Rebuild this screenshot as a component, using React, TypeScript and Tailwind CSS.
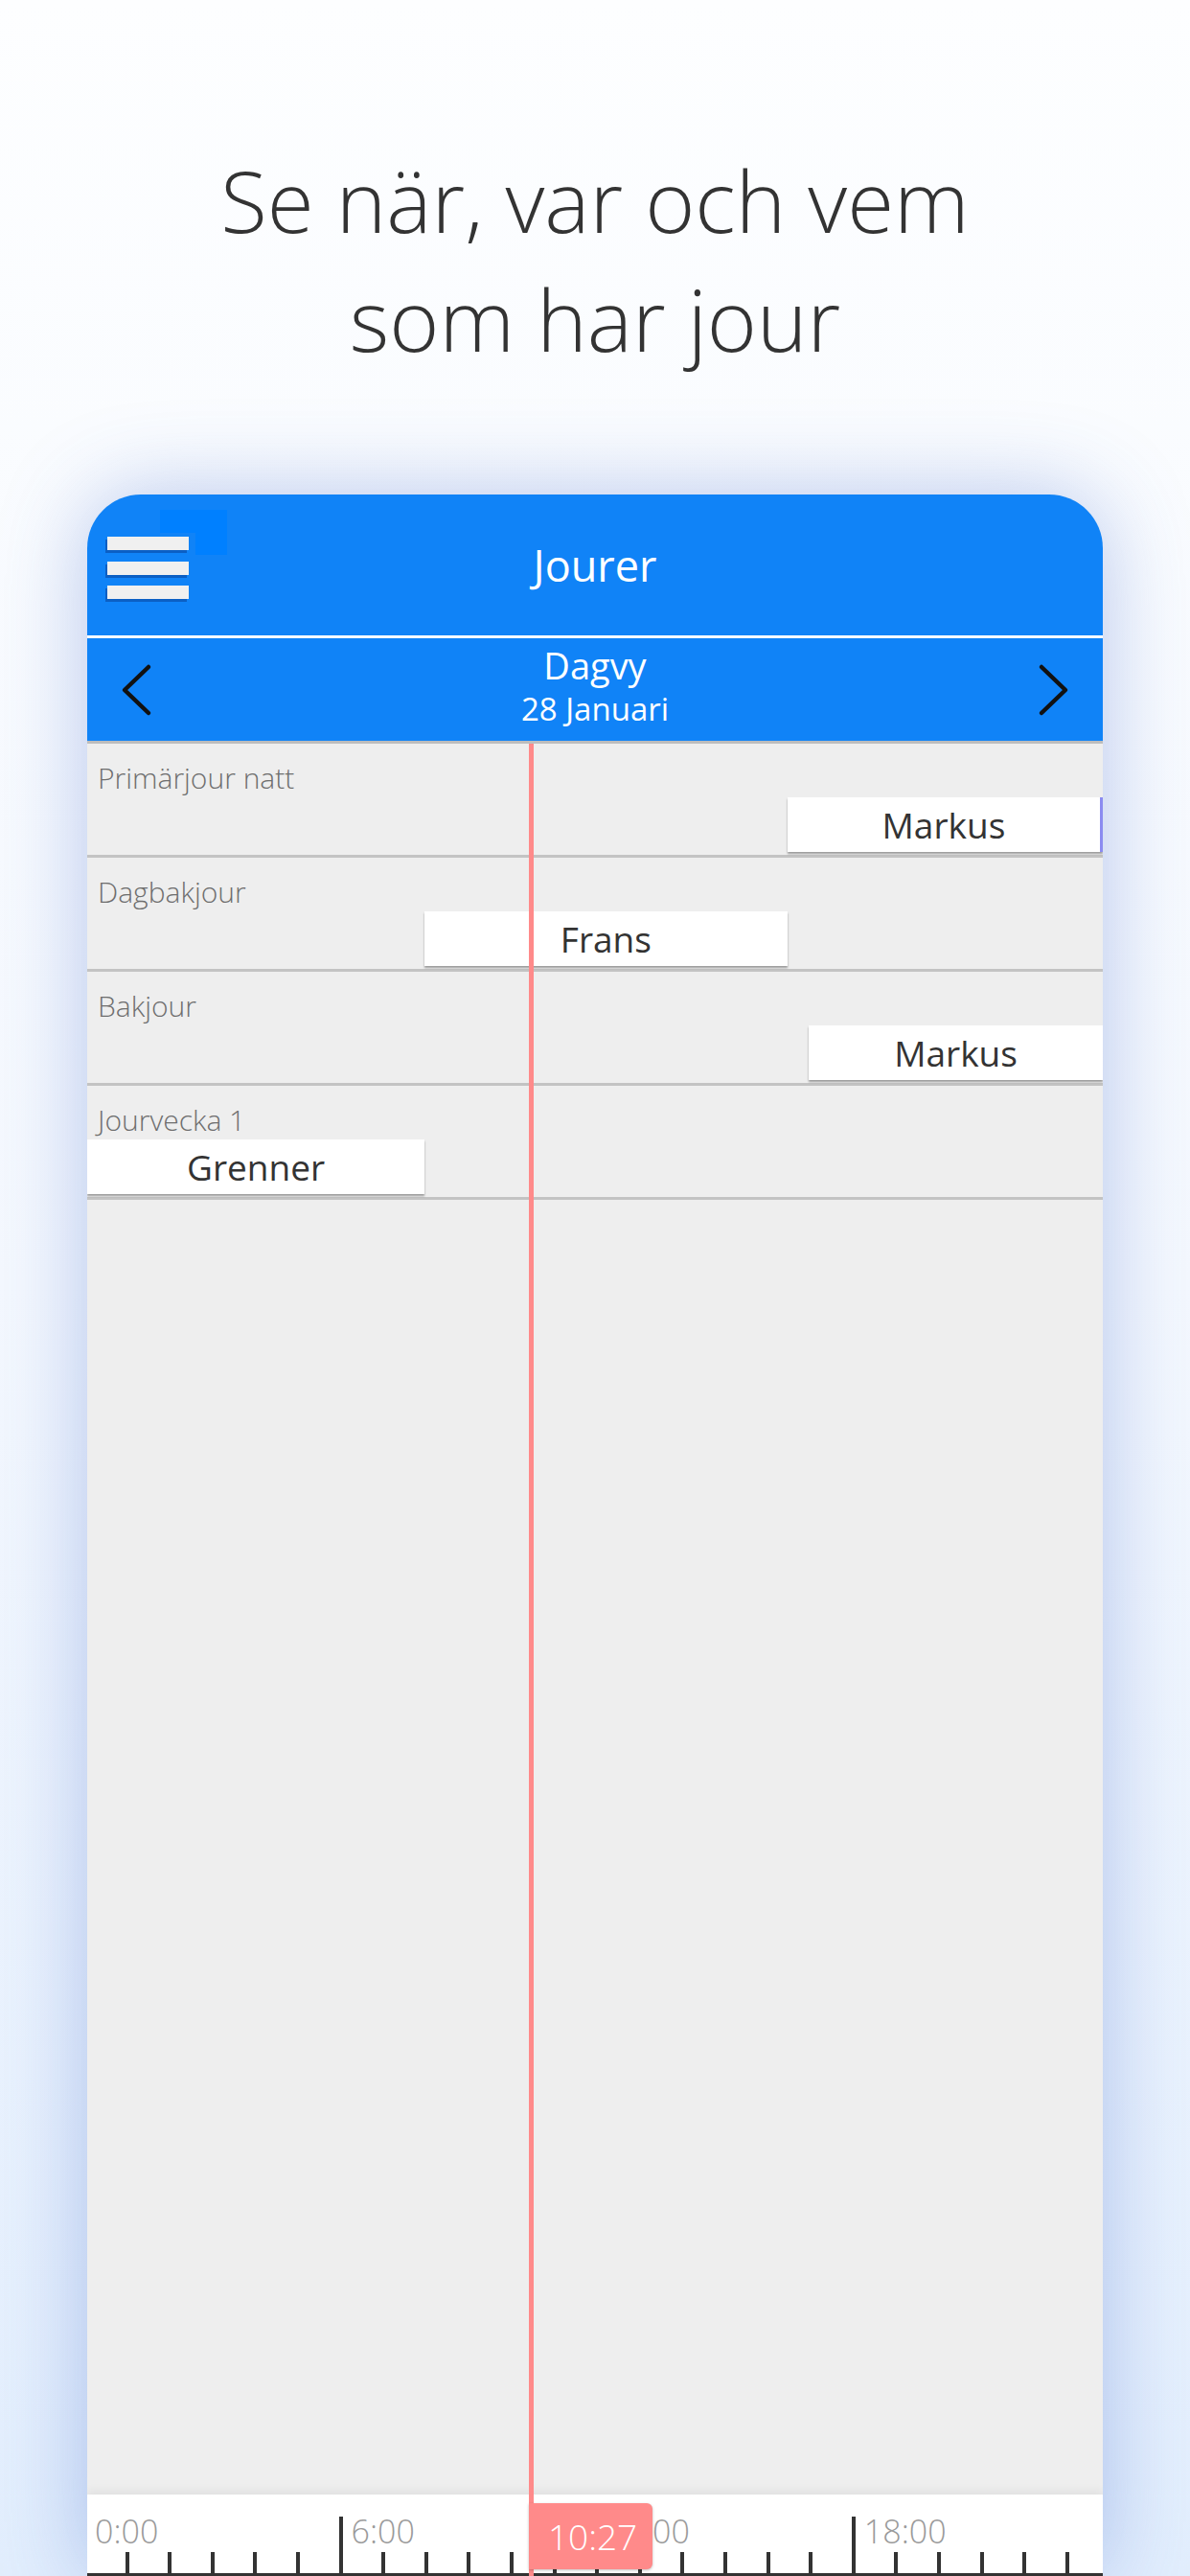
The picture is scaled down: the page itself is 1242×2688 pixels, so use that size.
import React from 'react';

// time scale of the day view: x (relative to phone left) = -5 + 44.6 * hour
const HOUR = 44.6;
const ORIGIN = -5;
const xAt = (h: number) => ORIGIN + HOUR * h;

type Shift = { name: string; from: number; to: number; edge?: boolean };
type Row = { label: string; shifts: Shift[] };

const rows: Row[] = [
  { label: 'Primärjour natt', shifts: [{ name: 'Markus', from: 16.5, to: 24.2, edge: true }] },
  { label: 'Dagbakjour', shifts: [{ name: 'Frans', from: 8, to: 16.5 }] },
  { label: 'Bakjour', shifts: [{ name: 'Markus', from: 17, to: 24.2 }] },
  { label: 'Jourvecka 1', shifts: [{ name: 'Grenner', from: 0.12, to: 8 }] },
];

const PHONE_W = 1060;

const Chevron = ({ dir }: { dir: 'left' | 'right' }) => (
  <svg width="34" height="56" viewBox="0 0 34 56" fill="none">
    <path
      d={dir === 'left' ? 'M29 4 L4 28 L29 52' : 'M5 4 L30 28 L5 52'}
      stroke="#111"
      strokeWidth="4.5"
      strokeLinecap="round"
      strokeLinejoin="round"
    />
  </svg>
);

const Hamburger = () => (
  <div className="relative h-[66px] w-[126px]">
    {/* highlight square behind the menu button */}
    <div className="absolute left-[55px] top-0 h-[24px] w-[70px] bg-[#0080ff]" />
    <div className="absolute left-[92px] top-0 h-[47px] w-[33px] bg-[#0080ff]" />
    <div className="absolute left-0 top-[28px] flex flex-col gap-[11.5px]">
      {[0, 1, 2].map((i) => (
        <div key={i} className="h-[14px] w-[85px] bg-[#f0f0f0] shadow-[-2px_3px_0_#0b5fc4]" />
      ))}
    </div>
  </div>
);

const ShiftRow = ({ row }: { row: Row }) => (
  <div className="relative h-[119px] border-b-[3px] border-[#c3c3c3]">
    <div className="pl-[11px] pt-[13px] text-[30px] font-light text-[#6e6e6e]">{row.label}</div>
    {row.shifts.map((s, i) => {
      const left = Math.max(0, xAt(s.from));
      const right = Math.min(PHONE_W, xAt(s.to));
      return (
        <div
          key={i}
          className={
            'absolute top-[56px] flex h-[57px] items-center justify-center bg-white text-[37px] text-[#333] shadow-[0_2px_2px_rgba(0,0,0,0.35)]' +
            (s.edge ? ' border-r-[3px] border-[#8b8bf0]' : '')
          }
          style={{ left, width: right - left }}
        >
          {s.name}
        </div>
      );
    })}
  </div>
);

const Timeline = () => {
  const hours = Array.from({ length: 25 }, (_, h) => h);
  return (
    <div className="relative h-[85px] bg-white shadow-[0_-5px_8px_rgba(0,0,0,0.05)]">
      {[0, 6, 12, 18].map((h) => (
        <div
          key={'l' + h}
          className="absolute top-[21px] text-[34px] font-light leading-[34px] text-[#9a9a9a]"
          style={{ left: xAt(h) + 13 }}
        >
          {h}:00
        </div>
      ))}
      {hours.map((h) => (
        <div
          key={'t' + h}
          className={
            'absolute bottom-0 w-[4px] bg-[#333]' + (h % 6 === 0 ? ' h-[62px]' : ' h-[25px]')
          }
          style={{ left: xAt(h) }}
        />
      ))}
      <div className="absolute bottom-0 left-0 right-0 h-[3px] bg-[#333]" />
      {/* current time marker, drawn over the 12:00 label */}
      <div
        className="absolute top-[9px] z-10 flex h-[69px] w-[129px] items-center justify-center rounded-r-[6px] bg-[#ff8a8a] pl-[4px] text-[37px] font-light text-white shadow-[0_1px_3px_rgba(0,0,0,0.25)]"
        style={{ left: xAt(10.45) }}
      >
        10:27
      </div>
    </div>
  );
};

export default function App() {
  return (
    <div className="h-[2688px] w-[1242px] overflow-hidden bg-gradient-to-b from-[#fdfeff] via-[#f4f8fe] to-[#e2eefd] font-['Open_Sans',sans-serif]">
      <h1 className="pt-[147px] text-center text-[89px] font-light leading-[124px] text-[#333]">
        Se när, var och vem
        <br />
        som har jour
      </h1>

      <div className="mx-[91px] mt-[121px] flex h-[2172px] flex-col overflow-hidden rounded-t-[56px] bg-[#eeeeee] shadow-[0_0_90px_rgba(60,100,200,0.35)]">
        {/* app bar */}
        <div className="grid h-[147px] grid-cols-[1fr_auto_1fr] items-center bg-[#1083f7] text-white">
          <div className="self-start pl-[21px] pt-[16px]">
            <Hamburger />
          </div>
          <div className="text-[45px]">Jourer</div>
          <div />
        </div>
        <div className="h-[3px] bg-white" />

        {/* day navigation */}
        <div className="flex h-[107px] items-center justify-between bg-[#1083f7] px-[35px] text-white">
          <Chevron dir="left" />
          <div className="flex flex-col items-center pb-[7px]">
            <div className="text-[38px] leading-[44px]">Dagvy</div>
            <div className="mt-[4px] text-[33px] leading-[40px]">28 Januari</div>
          </div>
          <Chevron dir="right" />
        </div>
        <div className="h-[3px] bg-[#bdbdbd]" />

        <div className="relative flex flex-1 flex-col">
          <div className="flex-1">
            {rows.map((r, i) => (
              <ShiftRow key={i} row={r} />
            ))}
          </div>
          <Timeline />
          <div
            className="absolute bottom-0 top-0 w-[5px] bg-[#ff8a8a]"
            style={{ left: xAt(10.45) }}
          />
        </div>
      </div>
    </div>
  );
}
